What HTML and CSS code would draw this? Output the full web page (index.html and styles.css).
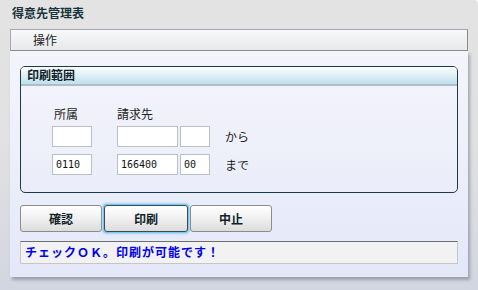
FILE: index.html
```html
<!DOCTYPE html>
<html lang="ja">
<head>
<meta charset="utf-8">
<link rel="stylesheet" href="styles.css">
</head>
<body>
<div class="screen">
  <div class="title">得意先管理表</div>
  <div class="window">
    <div class="toolbar"><span>操作</span></div>
    <div class="panel">
      <div class="group">
        <div class="group-head">印刷範囲</div>
        <div class="form">
          <div class="lbl l1">所属</div>
          <div class="lbl l2">請求先</div>
          <div class="row">
            <div class="inp w40"></div>
            <div class="inp w61 gap"></div>
            <div class="inp w30"></div>
            <div class="suffix">から</div>
          </div>
          <div class="row">
            <div class="inp w40">0110</div>
            <div class="inp w61 gap">166400</div>
            <div class="inp w30">00</div>
            <div class="suffix">まで</div>
          </div>
        </div>
      </div>
      <div class="buttons">
        <div class="btn">確認</div>
        <div class="btn focus">印刷</div>
        <div class="btn">中止</div>
      </div>
      <div class="status">チェックＯＫ。印刷が可能です！</div>
    </div>
  </div>
</div>
</body>
</html>
```

FILE: styles.css
```css
html, body {
  margin: 0;
  padding: 0;
}
body {
  width: 478px;
  height: 290px;
  overflow: hidden;
  font-family: "Noto Sans CJK JP", "DejaVu Sans", sans-serif;
  font-size: 12px;
  color: #1e1e1e;
}
.screen {
  width: 478px;
  height: 290px;
  background: linear-gradient(#e3e3e3 0%, #e1e1e3 50%, #d2d6e0 100%);
  border-top-right-radius: 4px;
  box-sizing: border-box;
}
.title {
  height: 29px;
  box-sizing: border-box;
  padding: 4px 0 0 12px;
  font-size: 12px;
  font-weight: bold;
  color: #17343c;
  line-height: 18px;
}
.window {
  margin-left: 10px;
  width: 458px;
}
.toolbar {
  height: 22px;
  box-sizing: border-box;
  border: 1px solid #a9a9ab;
  border-right-color: #8c8c8e;
  border-bottom-color: #8c8c8e;
  background: linear-gradient(#f8f8fa, #e8e9eb);
  padding-left: 22px;
  line-height: 19px;
  font-size: 12px;
  color: #222;
}
.panel {
  height: 226px;
  box-sizing: border-box;
  background: linear-gradient(#f4f5fb 0%, #eef0fa 40%, #e3e7f8 100%);
  box-shadow: 2px 3px 3px rgba(90, 95, 110, 0.45);
  padding: 15px 10px 0 10px;
}
.group {
  height: 127px;
  box-sizing: border-box;
  border: 1px solid #1d3a46;
  border-radius: 5px;
  overflow: hidden;
}
.group-head {
  height: 19px;
  box-sizing: border-box;
  background: linear-gradient(#fbfdfe 0%, #e2f0f6 45%, #bfe0ec 100%);
  border-bottom: 2px solid #b2bcc4;
  padding-left: 6px;
  font-weight: bold;
  font-size: 12px;
  line-height: 16px;
  color: #0f2228;
}
.form {
  display: grid;
  grid-template-columns: 65px auto;
  padding: 18px 0 0 31px;
  row-gap: 0;
}
.lbl {
  height: 22px;
  line-height: 20px;
  font-size: 12px;
  color: #222;
}
.l1 { padding-left: 2px; }
.l1, .l2 { margin-bottom: 0; }
.row {
  grid-column: 1 / 3;
  display: flex;
  align-items: center;
  height: 21px;
  margin-bottom: 7px;
}
.inp {
  height: 21px;
  box-sizing: border-box;
  border: 1px solid #b9c1c7;
  background: #fff;
  font-family: "DejaVu Sans Mono", monospace;
  font-size: 10px;
  line-height: 19px;
  padding-left: 3px;
  color: #111;
}
.w40 { width: 40px; }
.w61 { width: 61px; }
.w30 { width: 30px; margin-left: 2px; }
.gap { margin-left: 25px; }
.suffix {
  margin-left: 15px;
  font-size: 12px;
  color: #222;
}
.buttons {
  display: flex;
  gap: 2px;
  margin-top: 12px;
}
.btn {
  width: 82px;
  height: 27px;
  box-sizing: border-box;
  border: 1px solid #8a8c8e;
  border-radius: 3px;
  background: linear-gradient(#ffffff 0%, #f2f2f2 45%, #dcdcdc 100%);
  text-align: center;
  line-height: 25px;
  font-weight: bold;
  font-size: 12px;
  color: #102428;
}
.btn.focus {
  width: 84px;
  border-color: #3a4a50;
  box-shadow: 0 0 0 1px #7cc6f2, 0 0 2px 2px rgba(110, 190, 240, 0.6);
}
.status {
  margin-top: 9px;
  height: 23px;
  box-sizing: border-box;
  border: 1px solid #c6c6c6;
  border-top: 1px solid #6e6e6e;
  background: #f2f2f2;
  color: #0000ee;
  font-weight: bold;
  font-size: 12px;
  line-height: 20px;
  padding-left: 4px;
  letter-spacing: 1px;
}
```
